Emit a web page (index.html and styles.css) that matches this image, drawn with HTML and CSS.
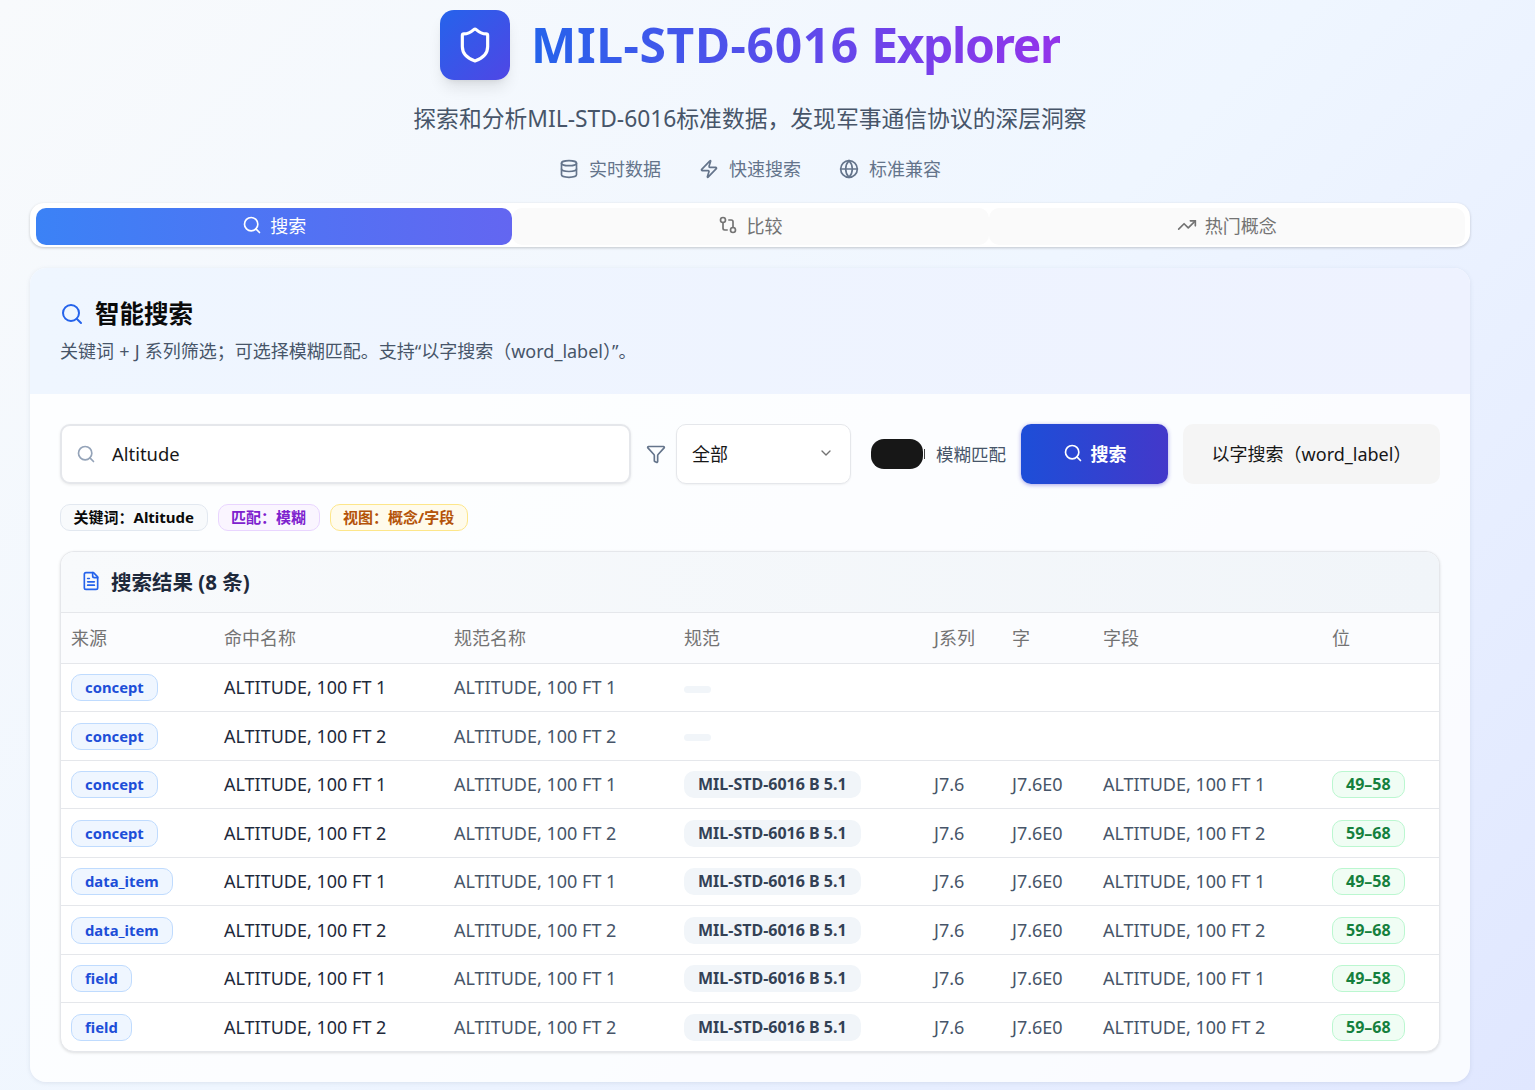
FILE: index.html
```html
<!DOCTYPE html>
<html>
<head>
    <meta charset="UTF-8">
    <meta name="viewport" content="width=device-width, initial-scale=1.0">
    <title>MIL-STD-6016 Explorer</title>
    <link rel="stylesheet" href="styles.css">
</head>
<body>
<div class="page">

    <!-- Header -->
    <header class="hero">
        <div class="hero-title">
            <div class="logo">
                <svg viewBox="0 0 24 24" class="logo-icon"><path d="M20 13c0 5-3.5 7.5-7.66 8.95a1 1 0 0 1-.67-.01C7.5 20.5 4 18 4 13V6a1 1 0 0 1 1-1c2 0 4.5-1.2 6.24-2.72a1.17 1.17 0 0 1 1.52 0C14.51 3.81 17 5 19 5a1 1 0 0 1 1 1z"/></svg>
            </div>
            <h1><span class="word-code">MIL-STD-6016</span> <span class="word-name">Explorer</span></h1>
        </div>
        <p class="subtitle">探索和分析MIL-STD-6016标准数据，发现军事通信协议的深层洞察</p>
        <div class="features">
            <span class="feature">
                <svg viewBox="0 0 24 24" class="icon"><ellipse cx="12" cy="5" rx="9" ry="3"/><path d="M3 5v14a9 3 0 0 0 18 0V5"/><path d="M3 12a9 3 0 0 0 18 0"/></svg>
                实时数据
            </span>
            <span class="feature">
                <svg viewBox="0 0 24 24" class="icon"><path d="M4 14a1 1 0 0 1-.78-1.63l9.9-10.2a.5.5 0 0 1 .86.46l-1.92 6.02A1 1 0 0 0 13 10h7a1 1 0 0 1 .78 1.63l-9.9 10.2a.5.5 0 0 1-.86-.46l1.92-6.02A1 1 0 0 0 11 14z"/></svg>
                快速搜索
            </span>
            <span class="feature">
                <svg viewBox="0 0 24 24" class="icon"><circle cx="12" cy="12" r="10"/><path d="M12 2a14.5 14.5 0 0 0 0 20 14.5 14.5 0 0 0 0-20"/><path d="M2 12h20"/></svg>
                标准兼容
            </span>
        </div>
    </header>

    <!-- Tabs -->
    <nav class="tabs">
        <div class="tab tab-active">
            <svg viewBox="0 0 24 24" class="icon"><circle cx="11" cy="11" r="8"/><path d="m21 21-4.3-4.3"/></svg>
            搜索
        </div>
        <div class="tab">
            <svg viewBox="0 0 24 24" class="icon"><circle cx="18" cy="18" r="3"/><circle cx="6" cy="6" r="3"/><path d="M13 6h3a2 2 0 0 1 2 2v7"/><path d="M11 18H8a2 2 0 0 1-2-2V9"/></svg>
            比较
        </div>
        <div class="tab">
            <svg viewBox="0 0 24 24" class="icon"><path d="M22 7 13.5 15.5 8.5 10.5 2 17"/><path d="M16 7h6v6"/></svg>
            热门概念
        </div>
    </nav>

    <!-- Search card -->
    <section class="card">
        <div class="card-head">
            <h2>
                <svg viewBox="0 0 24 24" class="icon-title"><circle cx="11" cy="11" r="8"/><path d="m21 21-4.3-4.3"/></svg>
                智能搜索
            </h2>
            <p>关键词 + J 系列筛选；可选择模糊匹配。支持“以字搜索（word_label）”。</p>
        </div>
        <div class="card-body">
            <div class="search-row">
                <div class="search-input">
                    <svg viewBox="0 0 24 24" class="icon-muted"><circle cx="11" cy="11" r="8"/><path d="m21 21-4.3-4.3"/></svg>
                    <span>Altitude</span>
                </div>
                <svg viewBox="0 0 24 24" class="icon-filter"><path d="M10 20a1 1 0 0 0 .55.9l2 1A1 1 0 0 0 14 21v-7a2 2 0 0 1 .52-1.34l7.22-7.99A1 1 0 0 0 21 3H3a1 1 0 0 0-.74 1.67l7.22 7.99A2 2 0 0 1 10 14z"/></svg>
                <div class="select">
                    <span>全部</span>
                    <svg viewBox="0 0 24 24" class="icon-chevron"><path d="m6 9 6 6 6-6"/></svg>
                </div>
                <div class="switch"><span class="switch-thumb"></span></div>
                <span class="switch-label">模糊匹配</span>
                <button class="btn-primary">
                    <svg viewBox="0 0 24 24" class="icon"><circle cx="11" cy="11" r="8"/><path d="m21 21-4.3-4.3"/></svg>
                    搜索
                </button>
                <button class="btn-secondary">以字搜索（word_label）</button>
            </div>

            <div class="chips">
                <span class="chip chip-grey">关键词：Altitude</span>
                <span class="chip chip-purple">匹配：模糊</span>
                <span class="chip chip-amber">视图：概念/字段</span>
            </div>

            <div class="results">
                <div class="results-head">
                    <svg viewBox="0 0 24 24" class="icon-doc"><path d="M15 2H6a2 2 0 0 0-2 2v16a2 2 0 0 0 2 2h12a2 2 0 0 0 2-2V7z"/><path d="M14 2v4a2 2 0 0 0 2 2h4"/><path d="M10 9H8"/><path d="M16 13H8"/><path d="M16 17H8"/></svg>
                    搜索结果 (8 条)
                </div>
                <table>
                    <colgroup>
                        <col class="c-source"><col class="c-name"><col class="c-name"><col class="c-spec"><col class="c-j"><col class="c-word"><col class="c-field"><col class="c-bits">
                    </colgroup>
                    <thead>
                        <tr><th>来源</th><th>命中名称</th><th>规范名称</th><th>规范</th><th>J系列</th><th>字</th><th>字段</th><th>位</th></tr>
                    </thead>
                    <tbody>
                        <tr>
                            <td><span class="tag">concept</span></td>
                            <td class="hit">ALTITUDE, 100 FT 1</td>
                            <td>ALTITUDE, 100 FT 1</td>
                            <td><span class="spec spec-empty"></span></td>
                            <td></td><td></td><td></td><td></td>
                        </tr>
                        <tr>
                            <td><span class="tag">concept</span></td>
                            <td class="hit">ALTITUDE, 100 FT 2</td>
                            <td>ALTITUDE, 100 FT 2</td>
                            <td><span class="spec spec-empty"></span></td>
                            <td></td><td></td><td></td><td></td>
                        </tr>
                        <tr>
                            <td><span class="tag">concept</span></td>
                            <td class="hit">ALTITUDE, 100 FT 1</td>
                            <td>ALTITUDE, 100 FT 1</td>
                            <td><span class="spec">MIL-STD-6016 B 5.1</span></td>
                            <td>J7.6</td><td>J7.6E0</td><td>ALTITUDE, 100 FT 1</td>
                            <td><span class="bits">49–58</span></td>
                        </tr>
                        <tr>
                            <td><span class="tag">concept</span></td>
                            <td class="hit">ALTITUDE, 100 FT 2</td>
                            <td>ALTITUDE, 100 FT 2</td>
                            <td><span class="spec">MIL-STD-6016 B 5.1</span></td>
                            <td>J7.6</td><td>J7.6E0</td><td>ALTITUDE, 100 FT 2</td>
                            <td><span class="bits">59–68</span></td>
                        </tr>
                        <tr>
                            <td><span class="tag">data_item</span></td>
                            <td class="hit">ALTITUDE, 100 FT 1</td>
                            <td>ALTITUDE, 100 FT 1</td>
                            <td><span class="spec">MIL-STD-6016 B 5.1</span></td>
                            <td>J7.6</td><td>J7.6E0</td><td>ALTITUDE, 100 FT 1</td>
                            <td><span class="bits">49–58</span></td>
                        </tr>
                        <tr>
                            <td><span class="tag">data_item</span></td>
                            <td class="hit">ALTITUDE, 100 FT 2</td>
                            <td>ALTITUDE, 100 FT 2</td>
                            <td><span class="spec">MIL-STD-6016 B 5.1</span></td>
                            <td>J7.6</td><td>J7.6E0</td><td>ALTITUDE, 100 FT 2</td>
                            <td><span class="bits">59–68</span></td>
                        </tr>
                        <tr>
                            <td><span class="tag">field</span></td>
                            <td class="hit">ALTITUDE, 100 FT 1</td>
                            <td>ALTITUDE, 100 FT 1</td>
                            <td><span class="spec">MIL-STD-6016 B 5.1</span></td>
                            <td>J7.6</td><td>J7.6E0</td><td>ALTITUDE, 100 FT 1</td>
                            <td><span class="bits">49–58</span></td>
                        </tr>
                        <tr>
                            <td><span class="tag">field</span></td>
                            <td class="hit">ALTITUDE, 100 FT 2</td>
                            <td>ALTITUDE, 100 FT 2</td>
                            <td><span class="spec">MIL-STD-6016 B 5.1</span></td>
                            <td>J7.6</td><td>J7.6E0</td><td>ALTITUDE, 100 FT 2</td>
                            <td><span class="bits">59–68</span></td>
                        </tr>
                    </tbody>
                </table>
            </div>
        </div>
    </section>
</div>
</body>
</html>
```

FILE: styles.css
```css
* {
    box-sizing: border-box;
}
html, body {
    height: 100%;
}
body {
    margin: 0;
    overflow: hidden;
    background: linear-gradient(135deg, #f8fafc 0%, #eff6ff 50%, #e0e7ff 100%);
    font-family: "Noto Sans", "Noto Sans CJK SC", sans-serif;
    color: #171717;
}
svg {
    fill: none;
    stroke: currentColor;
    stroke-width: 2;
    stroke-linecap: round;
    stroke-linejoin: round;
    flex-shrink: 0;
}
.page {
    width: 1440px;
    margin-left: 30px;
    padding-top: 10px;
}

/* Header */
.hero {
    display: flex;
    flex-direction: column;
    align-items: center;
}
.hero-title {
    display: flex;
    align-items: center;
    gap: 21px;
    height: 70px;
}
.logo {
    width: 70px;
    height: 70px;
    border-radius: 14px;
    background: linear-gradient(135deg, #2563eb, #4f46e5);
    box-shadow: 0 10px 15px -3px rgba(0, 0, 0, 0.1), 0 4px 6px -4px rgba(0, 0, 0, 0.1);
    display: flex;
    align-items: center;
    justify-content: center;
}
.logo-icon {
    width: 38px;
    height: 38px;
    color: #fff;
}
h1 {
    margin: 0;
    font-size: 48px;
    line-height: 70px;
    font-weight: 700;
    white-space: nowrap;
    background: linear-gradient(90deg, #2563eb, #9333ea);
    -webkit-background-clip: text;
    background-clip: text;
    color: transparent;
}
.word-code {
    letter-spacing: 0.6px;
}
.word-name {
    letter-spacing: -1.4px;
}
.subtitle {
    margin: 21px 0 0;
    font-size: 22.8px;
    line-height: 36px;
    color: #475569;
}
.features {
    display: flex;
    gap: 38px;
    margin-top: 18px;
    font-size: 18px;
    line-height: 28px;
    color: #64748b;
}
.feature {
    display: flex;
    align-items: center;
    gap: 10px;
}
.icon {
    width: 20px;
    height: 20px;
}

/* Tabs */
.tabs {
    display: grid;
    grid-template-columns: repeat(3, 1fr);
    margin-top: 20px;
    height: 44px;
    padding: 5px 5px 2px 6px;
    background: #fff;
    border-radius: 14px;
    box-shadow: 0 1px 3px rgba(0, 0, 0, 0.2);
}
.tab {
    display: flex;
    align-items: center;
    justify-content: center;
    gap: 8px;
    padding-bottom: 3px;
    font-size: 18px;
    color: #737373;
    background: #fafafa;
    border-radius: 10px;
}
.tab-active {
    color: #fff;
    background: linear-gradient(90deg, #3b82f6, #6366f1);
}

/* Card */
.card {
    margin-top: 21px;
    height: 814px;
    background: rgba(255, 255, 255, 0.8);
    border-radius: 16px;
    box-shadow: 0 1px 4px rgba(100, 116, 139, 0.15);
    overflow: hidden;
}
.card-head {
    height: 126px;
    padding: 28px 30px 0;
    background: linear-gradient(90deg, #eff6ff, #eef2ff);
}
h2 {
    margin: 0;
    display: flex;
    align-items: center;
    gap: 11px;
    font-size: 24.5px;
    line-height: 36px;
    font-weight: 700;
    color: #0a0a0a;
}
.icon-title {
    width: 24px;
    height: 24px;
    color: #2563eb;
}
.card-head p {
    margin: 5px 0 0;
    font-size: 18px;
    line-height: 28px;
    word-spacing: 0.5px;
    color: #475569;
}
.card-body {
    padding: 30px;
}

/* Search row */
.search-row {
    display: flex;
    align-items: center;
    height: 60px;
}
.search-input {
    width: 571px;
    height: 60px;
    display: flex;
    align-items: center;
    gap: 16px;
    padding: 0 0 1px 14px;
    font-size: 18.4px;
    color: #171717;
    background: #fff;
    border: 2px solid #e5e7eb;
    border-radius: 10px;
    box-shadow: 0 1px 3px rgba(0, 0, 0, 0.08);
}
.icon-muted {
    width: 20px;
    height: 20px;
    color: #94a3b8;
}
.icon-filter {
    width: 20px;
    height: 20px;
    margin: 0 10px 0 15px;
    color: #64748b;
}
.select {
    width: 175px;
    height: 60px;
    display: flex;
    align-items: center;
    justify-content: space-between;
    padding: 0 16px 2px 15px;
    font-size: 18px;
    background: #fff;
    border: 1px solid #e5e7eb;
    border-radius: 10px;
    box-shadow: 0 1px 2px rgba(0, 0, 0, 0.05);
}
.icon-chevron {
    width: 16px;
    height: 16px;
    color: #737373;
}
.switch {
    position: relative;
    width: 52px;
    height: 30px;
    margin: 0 2px 0 20px;
    border-radius: 13px;
    background: #171717;
}
.switch-thumb {
    position: absolute;
    top: 10px;
    right: -2px;
    width: 1px;
    height: 10px;
    background: #404040;
}
.switch-label {
    width: 70px;
    margin: 0 0 2px 11px;
    font-size: 17.5px;
    white-space: nowrap;
    color: #475569;
}
.btn-primary,
.btn-secondary {
    height: 60px;
    display: flex;
    align-items: center;
    justify-content: center;
    padding: 0 0 2px;
    border: 0;
    font-family: inherit;
    font-size: 18px;
    border-radius: 10px;
}
.btn-primary {
    width: 147px;
    margin-left: 15px;
    gap: 8px;
    font-weight: 700;
    color: #fff;
    background: linear-gradient(90deg, #1d4ed8, #4338ca);
    box-shadow: 0 1px 4px rgba(67, 56, 202, 0.45);
}
.btn-secondary {
    width: 257px;
    margin-left: 15px;
    color: #171717;
    background: #f5f5f5;
}

/* Chips */
.chips {
    display: flex;
    gap: 10px;
    margin-top: 20px;
}
.chip {
    height: 27px;
    display: flex;
    align-items: center;
    padding: 0 12.5px 2px;
    font-size: 15px;
    font-weight: 700;
    border: 1px solid;
    border-radius: 10px;
}
.chip-grey {
    color: #0a0a0a;
    background: #f8fafc;
    border-color: #e2e8f0;
}
.chip-purple {
    color: #7e22ce;
    background: #faf5ff;
    border-color: #e9d5ff;
}
.chip-amber {
    color: #b45309;
    background: #fffbeb;
    border-color: #fde68a;
}

/* Results table */
.results {
    margin-top: 20px;
    background: #fff;
    border: 1px solid #e5e7eb;
    border-radius: 14px;
    box-shadow: 0 1px 3px rgba(0, 0, 0, 0.12);
    overflow: hidden;
}
.results-head {
    height: 61px;
    display: flex;
    align-items: center;
    gap: 10px;
    padding: 0 0 2px 20px;
    font-size: 20.5px;
    font-weight: 700;
    color: #1e293b;
    background: linear-gradient(90deg, #f8fafc, #f1f5f9);
    border-bottom: 1px solid #e5e7eb;
}
.icon-doc {
    width: 20px;
    height: 20px;
    color: #2563eb;
}
table {
    width: 100%;
    table-layout: fixed;
    border-collapse: collapse;
    font-size: 18px;
}
.c-source { width: 153px; }
.c-name { width: 230px; }
.c-spec { width: 250px; }
.c-j { width: 78px; }
.c-word { width: 91px; }
.c-field { width: 229px; }
.c-bits { width: 118px; }
th {
    height: 50px;
    padding: 0 10px 2px;
    text-align: left;
    font-weight: 400;
    color: #737373;
    background: #fbfcfe;
    border-bottom: 1px solid #e5e7eb;
}
td {
    height: 48.5px;
    padding: 0 10px;
    color: #475569;
    white-space: nowrap;
    border-bottom: 1px solid #e5e7eb;
}
tbody tr:last-child td {
    border-bottom: 0;
}
td.hit {
    color: #1e293b;
}
.tag,
.spec,
.bits {
    display: inline-block;
    height: 27px;
    line-height: 25px;
    padding: 0 13px;
    font-size: 15px;
    font-weight: 700;
    vertical-align: middle;
    border-radius: 10px;
}
.tag {
    padding: 0 13px;
    font-size: 14.8px;
    color: #1d4ed8;
    background: #eff6ff;
    border: 1px solid #bfdbfe;
}
.spec {
    line-height: 27px;
    padding: 0 14px;
    font-size: 16px;
    color: #334155;
    background: #f1f5f9;
}
.spec-empty {
    width: 27px;
    height: 7px;
    padding: 0;
    border-radius: 4px;
}
.bits {
    font-size: 16px;
    color: #15803d;
    background: #f0fdf4;
    border: 1px solid #bbf7d0;
}
```
